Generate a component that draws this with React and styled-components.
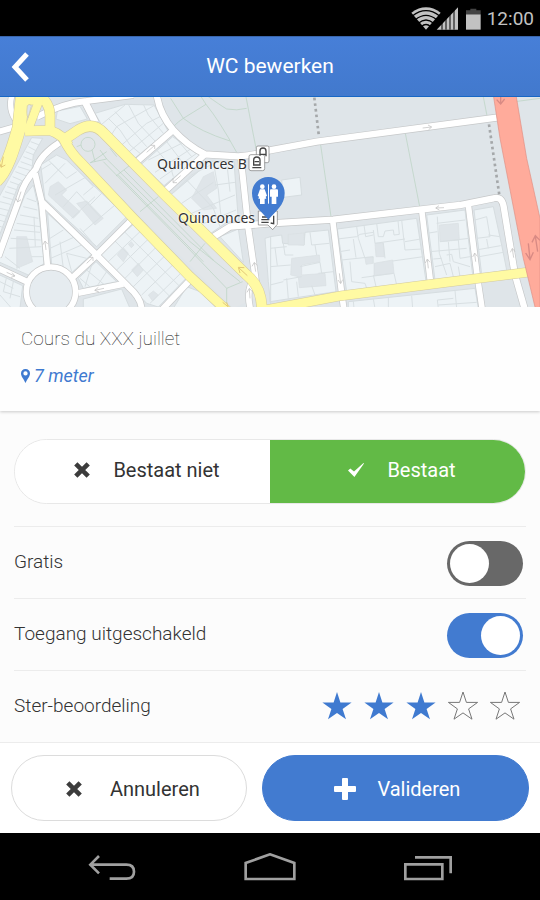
import React, { useState } from 'react'
import styled, { createGlobalStyle } from 'styled-components'

const App = () => {
  const [exists, setExists] = useState(true)
  const [free, setFree] = useState(false)
  const [disabledAccess, setDisabledAccess] = useState(true)
  const [rating, setRating] = useState(3)

  return (
    <Screen>
      <GlobalStyle />

      <StatusBar>
        <StatusIcons />
        <span>12:00</span>
      </StatusBar>

      <Header>
        <BackButton type="button" aria-label="Terug">
          <svg width="18" height="30" viewBox="0 0 18 30" fill="none" stroke="#fff" strokeWidth="5">
            <path d="M16 2 L4 15 L16 28" />
          </svg>
        </BackButton>
        <Title>WC bewerken</Title>
      </Header>

      <MapArea>
        <StreetMap />
        <MapLabel $x={-113} $y={57}>Quinconces B</MapLabel>
        <MapLabel $x={-92} $y={111}>Quinconces</MapLabel>
      </MapArea>

      <Info>
        <Address>Cours du XXX juillet</Address>
        <Distance>
          <svg width="9" height="14" viewBox="0 0 9 14" fill="#3f7ad0">
            <path fillRule="evenodd" d="M4.5 0 A4.4 4.4 0 0 1 9 4.5 C9 7.5 6.5 9.5 4.5 14 C2.5 9.5 0 7.5 0 4.5 A4.4 4.4 0 0 1 4.5 0Z M4.5 2.3 A2.1 2.1 0 1 0 4.5 6.6 A2.1 2.1 0 1 0 4.5 2.3Z" />
          </svg>
          7 meter
        </Distance>
      </Info>

      <Form>
        <Segmented>
          <Segment type="button" aria-pressed={!exists} onClick={() => setExists(false)}>
            <CrossIcon />
            Bestaat niet
          </Segment>
          <Segment type="button" $green aria-pressed={exists} onClick={() => setExists(true)}>
            <svg width="16" height="16" viewBox="0 0 16 16" fill="#fff">
              <path d="M0 8.5 L2.3 6.4 L6 9.6 L15.5 1 L16 1.6 L6.4 15 Z" />
            </svg>
            Bestaat
          </Segment>
        </Segmented>

        <Row>
          <label htmlFor="free">Gratis</label>
          <Switch id="free" type="checkbox" checked={free} onChange={() => setFree(!free)} />
        </Row>

        <Row>
          <label htmlFor="access">Toegang uitgeschakeld</label>
          <Switch id="access" type="checkbox" checked={disabledAccess} onChange={() => setDisabledAccess(!disabledAccess)} />
        </Row>

        <Row>
          <span id="rating">Ster-beoordeling</span>
          <Stars role="radiogroup" aria-labelledby="rating">
            {[1, 2, 3, 4, 5].map(n => (
              <Star key={n} $filled={n <= rating}>
                <input type="radio" name="stars" aria-label={`${n}`} checked={n === rating} onChange={() => setRating(n)} />
                <svg width="36" height="32" viewBox="0 0 36 32">
                  <path d="M18 2 L21.4 12.4 H32.6 L23.6 18.9 L27 29.2 L18 22.9 L9 29.2 L12.4 18.9 L3.4 12.4 H14.6 Z" />
                </svg>
              </Star>
            ))}
          </Stars>
        </Row>
      </Form>

      <Actions>
        <Action type="button">
          <CrossIcon />
          Annuleren
        </Action>
        <Action type="button" $primary>
          <svg width="22" height="22" viewBox="0 0 22 22" fill="#fff">
            <path d="M9 0 H13 Q14 0 14 1 V8 H21 Q22 8 22 9 V13 Q22 14 21 14 H14 V21 Q14 22 13 22 H9 Q8 22 8 21 V14 H1 Q0 14 0 13 V9 Q0 8 1 8 H8 V1 Q8 0 9 0Z" />
          </svg>
          Valideren
        </Action>
      </Actions>

      <NavBar>
        <button type="button" aria-label="Vorige">
          <svg width="52" height="28" viewBox="259 355 156 84">
            <path d="M298 364 L272 390 L298 416 M272 390 H380 C396 390 403 398 403 411 C403 425 396 432 380 432 H330" />
          </svg>
        </button>
        <button type="button" aria-label="Start">
          <svg width="52" height="28" viewBox="732 355 156 84">
            <path d="M737 433 V385 L810 359 L883 385 V433 Z" />
          </svg>
        </button>
        <button type="button" aria-label="Recent">
          <svg width="52" height="28" viewBox="399 355 156 84">
            <path d="M409 389 H520 V433 H409 Z M438 368 H545 V416" />
          </svg>
        </button>
      </NavBar>
    </Screen>
  )
}

export default App

const CrossIcon = () => (
  <svg width="16" height="16" viewBox="0 0 16 16" stroke="#3c3c3c" strokeWidth="4.6">
    <path d="M1.8 1.8 L14.2 14.2 M14.2 1.8 L1.8 14.2" />
  </svg>
)

const StatusIcons = () => (
  <svg width="70" height="23" viewBox="33 20 210 69">
    <path fill="#c2c2c2" d="M78 88 L34 37 Q78 5 122 37 Z" />
    <g fill="none" stroke="#000" strokeWidth="4">
      <path d="M37 47 Q78 15 119 47" />
      <path d="M46 58 Q78 32 110 58" />
      <path d="M55 69 Q78 49 101 69" />
      <path d="M64 79 Q78 66 92 79" />
    </g>
    <path fill="#c2c2c2" d="M110 88 L174 21 V88 Z" />
    <path stroke="#000" strokeWidth="3" d="M126 66 V88 M138 54 V88 M150 42 V88 M162 28 V88" />
    <path fill="#444" d="M198 30 H211 V25 H229 V30 H242 V42 H198 Z" />
    <path fill="#c2c2c2" d="M198 42 H242 V88 H198 Z" />
  </svg>
)

// map units are a third of a pixel
const streets = [
  ['M-10 112 L60 92', 18],
  ['M110 66 Q190 24 260 18 L400 0', 18],
  ['M36 0 Q24 40 46 74', 16],
  ['M252 15 L286 82', 20],
  ['M470 0 Q480 60 520 105 Q560 150 615 178 L715 184 Q770 180 810 166 L950 140 L1490 68', 19],
  ['M520 105 L405 205', 18],
  ['M615 178 L495 288', 18],
  ['M722 184 L745 400 L768 560', 18],
  ['M630 432 L690 395 L800 386 L1000 374 L1380 330 L1480 310 Q1505 302 1511 335 L1545 540 L1575 645', 19],
  ['M178 143 Q120 180 108 222 Q72 260 60 305 L-5 485', 18],
  ['M105 235 L125 320 L290 480 L385 575 Q425 610 425 645', 18],
  ['M125 320 L143 520', 17],
  ['M400 370 L290 480 L215 550', 18],
  ['M-5 520 L85 562', 18],
  ['M79 590 A74 74 0 1 1 227 590 A74 74 0 1 1 79 590', 17],
  ['M235 594 L370 567', 18],
  ['M580 545 L485 645', 18],
  ['M768 540 Q735 580 752 645', 17],
  ['M998 375 L1025 595 L1032 645', 17],
  ['M1265 345 L1292 565', 17],
  ['M1405 330 L1432 545 L1447 645', 17],
]

const avenues = [
  ['M-12 256 C22 225 42 150 57 100 L68 0', 40],
  ['M108 -6 Q152 20 150 66 V104', 28],
  ['M75 108 L150 106 Q190 120 205 150', 28],
  ['M86 100 L118 15', 24],
  ['M50 14 H128', 30],
  ['M198 130 L235 105 Q278 78 312 115 L495 300 L740 540 Q785 575 786 645', 30],
  ['M190 130 Q210 172 240 200 L400 370 L570 545 L690 655', 28],
  ['M780 648 L1025 602 L1340 562 L1582 532', 27],
]

const blocks = [
  'M285 55 L375 28 L462 30 L504 108 L404 190 L305 90 Z',
  'M172 48 L240 34 L262 72 L210 86 L168 72 Z',
  'M518 125 L602 182 L492 272 L424 208 Z',
  'M630 200 L702 200 L715 375 L680 382 L628 418 L512 300 Z',
  'M95 128 L128 130 L100 180 L95 230 L55 270 L-5 430 V310 L50 210 Z',
  'M122 210 L170 180 L200 195 L380 365 L290 455 L135 312 Z',
  'M75 300 L100 270 L115 335 L132 505 L85 540 L-5 500 Z',
  'M143 355 L275 478 L213 535 L155 510 Z',
  'M300 478 L400 388 L560 548 L475 636 L440 625 Z',
  'M235 550 L288 500 L350 560 L250 580 Z',
  'M-5 538 L68 572 L60 640 H-5 Z',
  'M250 612 L365 582 L390 640 H250 Z',
  'M660 425 L715 402 L730 502 Z',
  'M560 575 L600 590 L650 640 H520 Z',
  'M845 255 L900 247 L905 300 L850 307 Z',
  'M810 425 L845 420 L848 445 L912 450 L915 412 L985 405 L1008 590 L810 620 Z',
  'M1012 402 L1250 370 L1278 558 L1040 590 Z',
  'M1280 360 L1395 345 L1418 540 L1305 555 Z',
  'M1422 345 L1480 335 L1505 450 L1520 525 L1445 538 Z',
  'M1045 620 L1425 580 L1435 640 H1045 Z',
  'M795 430 L812 425 V630 L805 560 Z',
]

const courts = [
  'M150 275 L175 260 L200 285 L185 300 L240 350 L220 370 L145 300 Z',
  'M230 325 L260 318 L310 370 L285 390 Z',
  'M610 245 L640 230 L650 280 L620 300 L650 340 L610 345 L575 310 Z',
  'M352 480 L370 458 L385 475 L370 500 Z',
  'M395 525 L415 505 L430 525 L412 545 Z',
  'M445 600 L460 588 L475 600 L458 618 Z',
  'M385 448 L394 440 L402 450 L394 458 Z',
  'M50 425 L80 425 L98 500 L50 520 Z',
  'M875 490 L958 480 L960 500 L905 510 L905 540 L975 535 L978 572 L898 578 L895 545 L872 540 Z',
  'M865 418 L912 414 L913 450 L865 450 Z',
  'M1125 445 L1150 443 L1153 485 L1128 485 Z',
  'M1122 505 L1178 495 L1182 535 L1122 542 Z',
  'M1318 390 L1375 385 L1378 435 L1320 440 Z',
  'M1095 488 L1120 486 L1120 505 L1098 508 Z',
]

const parcels = [
  'M305 88 L375 30 M335 118 L350 95 L465 30 M365 150 L440 85 L480 65 M385 172 L490 85 M325 70 L360 105 L390 150 L420 175 M345 50 L400 110 L440 155 M385 28 L415 85 L465 138 M430 28 L445 60 L490 115',
  'M445 195 L545 145 M465 232 L572 162 M480 252 L590 175 M470 165 L510 210 L520 245 M500 140 L550 205 M530 132 L575 185',
  'M512 300 L575 240 L650 200 M545 325 L640 262 M575 355 L705 300 M600 390 L708 345 M560 255 L640 340 L660 395 M640 200 L655 285 L665 385 M680 200 L690 290 M645 270 L705 262',
  'M92 140 L118 150 M85 155 L110 168 M77 170 L103 180 M70 185 L98 196 M62 200 L95 212 M54 215 L92 227 M46 230 L80 243 M38 245 L68 258 M30 260 L58 270 M22 275 L53 285 M15 290 L48 300 M8 305 L43 315 M0 320 L38 330 M0 340 L32 348 M0 358 L26 366 M0 376 L20 382 M0 394 L14 400',
  'M122 225 L155 205 L200 250 L230 230 M145 195 L185 235 M135 265 L195 205 M165 300 L260 245 M190 335 L230 290 L300 365 M215 370 L285 305 M250 410 L345 330 M240 232 L280 275 L250 300 M310 290 L270 330 M275 440 L240 400',
  'M80 310 L108 320 M70 335 L112 345 M60 360 L115 370 M50 385 L120 395 M42 405 L120 412 M32 430 L122 435 M28 460 L124 455 M15 485 L60 520 M95 485 L130 485 M102 365 L106 455',
  'M150 430 L190 405 M150 460 L225 425 M152 490 L245 450 M190 520 L180 440 M215 530 L200 475 L260 490',
  'M325 500 L420 410 M350 525 L445 432 M375 550 L470 455 M400 575 L495 482 M425 600 L520 508 M450 625 L545 532 M345 438 L510 605 M375 412 L540 575',
  'M260 525 L320 575 M240 550 L275 580 M275 510 L255 575 M320 530 L290 575',
  'M0 560 L40 580 M20 545 L10 590 L60 605 M0 600 L35 640 M40 560 L30 610',
  'M810 460 L860 455 M810 515 L872 510 M825 458 L832 512 M850 445 L855 480 L880 480 M850 555 L905 545 M860 550 L865 612 M890 560 L895 605 M930 412 L935 450 L988 445 M945 450 L950 480 M955 535 L1000 530 M900 515 L960 502 L965 535 M935 572 L945 600 M810 570 L850 560',
  'M1012 432 L1070 425 L1080 418 L1120 412 M1018 470 L1050 465 M1025 495 L1120 485 M1070 395 L1075 430 L1095 490 M1092 390 L1097 425 L1120 420 M1060 432 L1068 488 M1120 405 L1125 445 L1215 432 M1130 385 L1135 425 L1150 425 L1155 408 L1180 405 L1182 420 L1198 418 L1194 378 M1205 375 L1215 465 L1265 462 M1215 440 L1262 432 M1178 498 L1270 485 M1182 535 L1190 570 M1050 500 L1055 560 L1095 565 L1100 580 M1120 540 L1128 575 M1150 445 L1155 490 M1085 548 L1180 535',
  'M1312 365 L1318 475 L1340 540 M1280 415 L1312 410 M1290 470 L1400 460 M1320 440 L1408 430 M1345 440 L1350 500 M1375 435 L1380 490 L1410 485 M1300 492 L1325 490 M1305 515 L1350 505 L1360 545 M1340 480 L1355 478 L1360 500 L1410 515 M1375 515 L1380 545 M1310 385 L1395 375',
  'M1425 375 L1460 365 L1470 425 L1430 430 M1428 465 L1502 452 M1465 420 L1500 425 M1460 432 L1465 460 M1438 485 L1510 472',
  'M1120 612 L1125 640 M1165 608 L1165 640 M1235 602 L1238 640 M1315 640 L1312 615 L1360 610 M1365 587 L1370 640 M1315 630 L1430 622 M1060 618 L1062 640',
]

const paths = [
  'M512 10 L550 70 L618 28 L600 0 M550 70 Q520 90 515 105 M550 70 Q600 110 690 138 M618 28 Q660 80 710 172 M618 0 Q660 30 680 42 Q710 48 740 40 M738 6 L768 160',
  'M243 148 A21 21 0 1 1 285 148 A21 21 0 1 1 243 148 M230 155 L243 150 M276 165 L285 200 M272 203 L320 170 M300 165 L320 192 L570 440 L720 560 M320 192 L270 203 M330 160 L350 185 M310 200 L560 455 L680 580 M348 243 L388 212 M372 225 L640 495 M355 240 L610 500 M420 350 L475 305 M570 500 L615 445 M680 635 L680 580 L728 560',
  'M962 150 L993 365 M1216 115 L1259 335 M1450 6 L1461 62 M1545 20 L1620 10',
]

const arrows = [
  'M440 172 L463 152 M452 151 L464 151 L464 162',
  'M542 242 L519 262 M519 250 L519 263 L531 263',
  'M260 505 L278 488 M268 487 L279 487 L279 498',
  'M20 532 L44 543 M36 533 L45 543 L33 547',
  'M63 290 L53 320 M48 310 L53 321 L63 314',
  'M138 465 L135 440 M129 449 L135 438 L143 447',
  'M312 580 L285 586 M295 577 L284 586 L297 591',
  'M767 530 L763 504 M756 514 L763 502 L771 511',
  'M750 610 L748 582 M741 592 L748 580 L757 590',
  'M1268 99 L1294 96 M1284 90 L1295 96 L1286 104',
  'M1332 338 L1308 339 M1317 332 L1307 339 L1318 345',
  'M1018 535 L1022 564 M1014 555 L1022 566 L1028 554',
  'M1285 520 L1282 494 M1276 504 L1282 492 L1290 502',
  'M1427 500 L1424 476 M1418 486 L1424 474 L1432 484',
  'M1541 488 L1537 462 M1531 472 L1537 460 L1545 470',
]

const StreetMap = () => (
  <MapSvg viewBox="0 6 1620 630" preserveAspectRatio="xMidYMid slice" aria-hidden="true">
    <rect y="0" width="1620" height="640" fill="#dfe5e9" />
    <path fill="#e2e6e9" d="M195 140 L310 100 L785 600 L700 640 Z" />
    <g fill="#edf3f6" stroke="#d6dde0" strokeWidth="3">
      {blocks.map(d => <path key={d} d={d} />)}
    </g>
    <g fill="#dfe5e9" stroke="#d9e0e3" strokeWidth="2">
      {courts.map(d => <path key={d} d={d} />)}
    </g>
    <g fill="none" stroke="#d9e0e3" strokeWidth="3">
      {parcels.map(d => <path key={d} d={d} />)}
    </g>
    <g fill="none" stroke="#b8d2bf" strokeWidth="2">
      {paths.map(d => <path key={d} d={d} />)}
    </g>
    <circle cx="153" cy="590" r="68" fill="#e6ecf0" />
    <g fill="none" stroke="#c6c8c9">
      {streets.map(([d, w]) => <path key={d} d={d} strokeWidth={w + 4} />)}
    </g>
    <g fill="none" stroke="#fff">
      {streets.map(([d, w]) => <path key={d} d={d} strokeWidth={w} />)}
    </g>
    <g fill="none" stroke="#d3caa0">
      {avenues.map(([d, w]) => <path key={d} d={d} strokeWidth={w + 3} />)}
    </g>
    <g fill="none" stroke="#fffaa3">
      {avenues.map(([d, w]) => <path key={d} d={d} strokeWidth={w} />)}
    </g>
    <path fill="#dfe5e9" stroke="#d3caa0" strokeWidth="2" d="M82 32 Q92 24 94 34 L84 68 Q78 60 82 32 Z" />
    <path fill="none" stroke="#a5a8aa" strokeWidth="8" strokeDasharray="8 9" d="M943 8 L957 126 M1467 88 L1498 300" />
    <path fill="#ffab9b" stroke="#e08f83" strokeWidth="2" d="M1480 0 H1548 L1580 190 L1620 370 V640 H1606 L1570 490 L1500 130 Z" />
    <g fill="none" stroke="#bbb" strokeWidth="2">
      {arrows.map(d => <path key={d} d={d} />)}
    </g>
    <path fill="none" stroke="#d88a84" strokeWidth="4" d="M1502 0 V26 M1490 14 L1502 27 L1514 12 M1585 445 L1590 492 M1577 474 L1590 494 L1600 472 M1613 470 L1606 424 M1596 442 L1606 422 L1620 436" />
    <path fill="none" stroke="#e3c878" strokeWidth="3" d="M742 542 L716 518 M733 518 L715 517 L720 534 M10 185 L4 216 M0 206 L3 217 L16 210 M668 622 L690 640 M680 622 L684 634" />

    {/* tram stops */}
    <g fill="#fff" stroke="#777" strokeWidth="2">
      <rect x="769" y="153" width="38" height="50" rx="5" />
      <rect x="747" y="179" width="47" height="48" rx="6" />
      <path d="M775 348 H832 V388 L818 404 L804 390 H775 Z" />
    </g>
    <g fill="none" stroke="#444" strokeWidth="4">
      <path d="M780 182 V168 Q780 159 789 159 Q798 159 798 168 V184 M780 178 H798" />
      <path d="M761 210 V196 Q761 186 770 186 Q780 186 780 196 V210 Z M764 200 H777 M757 218 H784" />
      <path d="M786 366 H806 M784 374 H808 M784 382 H806 M821 362 V386 L812 384" />
    </g>

    <path fill="#427bd0" d="M805 246 A48 48 0 0 1 854 295 C854 330 828 348 805 374 C782 348 756 330 756 295 A48 48 0 0 1 805 246 Z" />
    <g fill="#fff">
      <circle cx="787" cy="275" r="7" />
      <path d="M780 283 H794 L801 302 L797 305 L799 311 H794 V327 H780 V311 H775 L777 305 L773 302 Z" />
      <rect x="804" y="268" width="3" height="58" />
      <circle cx="822" cy="275" r="7" />
      <path d="M812 283 H832 Q834 284 834 287 V305 H829 V327 H815 V305 H810 V287 Q810 284 812 283 Z" />
    </g>
  </MapSvg>
)

const GlobalStyle = createGlobalStyle`
  * {
    box-sizing: border-box;
  }

  body {
    margin: 0;
    background: #fcfcfc;
    font-family: Roboto, sans-serif;
    font-size: 19px;
    color: #333;
  }

  button {
    border: 0;
    padding: 0;
    background: none;
    font: inherit;
    cursor: pointer;
  }

  svg {
    display: block;
    flex-shrink: 0;
  }
`

const Screen = styled.main`
  min-height: 100vh;
  display: flex;
  flex-direction: column;
`

const StatusBar = styled.div`
  height: 36px;
  padding-right: 6px;
  display: flex;
  justify-content: flex-end;
  align-items: center;
  gap: 6px;
  background: #000;
  color: #c2c2c2;
`

const Header = styled.header`
  height: 61px;
  padding: 0 11px;
  display: grid;
  grid-template-columns: 40px 1fr 40px;
  align-items: center;
  background: linear-gradient(#477fd8, #4279cd);
  border-top: 1px solid #3a66ab;
  border-bottom: 1px solid #1767c5;
`

const BackButton = styled.button`
  height: 44px;
  display: flex;
  align-items: center;
`

const Title = styled.h1`
  margin: 0;
  padding-bottom: 2px;
  font-size: 21px;
  font-weight: 400;
  text-align: center;
  color: #fff;
`

const MapArea = styled.div`
  position: relative;
  height: 210px;
  overflow: hidden;
`

const MapSvg = styled.svg`
  width: 100%;
  height: 100%;
`

const MapLabel = styled.span`
  position: absolute;
  left: calc(50% + ${props => props.$x}px);
  top: ${props => props.$y}px;
  font: 14px/20px "Noto Sans", sans-serif;
  color: #333;
  white-space: nowrap;
  text-shadow: 0 0 2px #fff, 0 0 2px #fff;
`

const Info = styled.section`
  height: 104px;
  padding: 20px 21px;
  background: #fefefe;
  box-shadow: 0 1px 3px rgba(0, 0, 0, 0.2);
`

const Address = styled.h2`
  margin: 0 0 12px;
  font-size: 19px;
  line-height: 24px;
  font-weight: 100;
  color: #222;
`

const Distance = styled.p`
  margin: 0;
  display: flex;
  align-items: center;
  gap: 4px;
  font-size: 18px;
  line-height: 26px;
  font-style: italic;
  color: #3f7ad0;
`

const Form = styled.form`
  flex: 1;
  padding: 28px 14px 0;
`

const Segmented = styled.div`
  height: 65px;
  margin-bottom: 22px;
  display: flex;
  border: 1px solid #e8e8e8;
  border-radius: 33px;
  overflow: hidden;
`

const Segment = styled.button`
  flex: 1;
  padding: 0 0 4px 9px;
  display: flex;
  justify-content: center;
  align-items: center;
  gap: 23px;
  font-size: 20px;
  background: ${props => props.$green ? '#62ba46' : '#fff'};
  color: ${props => props.$green ? '#fff' : '#333'};
`

const Row = styled.div`
  height: 72px;
  padding: 0 3px 2px 0;
  display: flex;
  justify-content: space-between;
  align-items: center;
  font-weight: 300;
  border-top: 1px solid #ececec;
`

const Switch = styled.input`
  appearance: none;
  width: 76px;
  height: 45px;
  margin: 4px 0 0;
  padding: 3px;
  display: flex;
  border-radius: 23px;
  background: #686868;
  cursor: pointer;

  &::before {
    content: '';
    width: 39px;
    height: 39px;
    border-radius: 50%;
    background: #fff;
  }

  &:checked {
    justify-content: flex-end;
    background: #427bd0;
  }
`

const Stars = styled.div`
  display: flex;
  gap: 6px;
`

const Star = styled.label`
  position: relative;
  cursor: pointer;

  input {
    position: absolute;
    inset: 0;
    margin: 0;
    opacity: 0;
  }

  path {
    fill: ${props => props.$filled ? '#3f7ad0' : 'none'};
    stroke: ${props => props.$filled ? 'none' : '#777'};
  }
`

const Actions = styled.div`
  padding: 12px 11px;
  display: grid;
  grid-template-columns: 15fr 17fr;
  gap: 15px;
  background: #fff;
  border-top: 1px solid #ececec;
`

const Action = styled.button`
  height: 66px;
  padding: 2px 0 0 ${props => props.$primary ? 4 : 8}px;
  display: flex;
  justify-content: center;
  align-items: center;
  gap: ${props => props.$primary ? 21 : 28}px;
  border: 1px solid ${props => props.$primary ? '#427bd0' : '#dcdcdc'};
  border-radius: 33px;
  font-size: 20px;
  background: ${props => props.$primary ? '#427bd0' : '#fff'};
  color: ${props => props.$primary ? '#fff' : '#333'};
`

const NavBar = styled.nav`
  height: 67px;
  padding: 0 33px;
  display: grid;
  grid-template-columns: repeat(3, 1fr);
  align-items: center;
  justify-items: center;
  background: #000;

  path {
    fill: none;
    stroke: #a0a0a0;
    stroke-width: 8;
  }
`
